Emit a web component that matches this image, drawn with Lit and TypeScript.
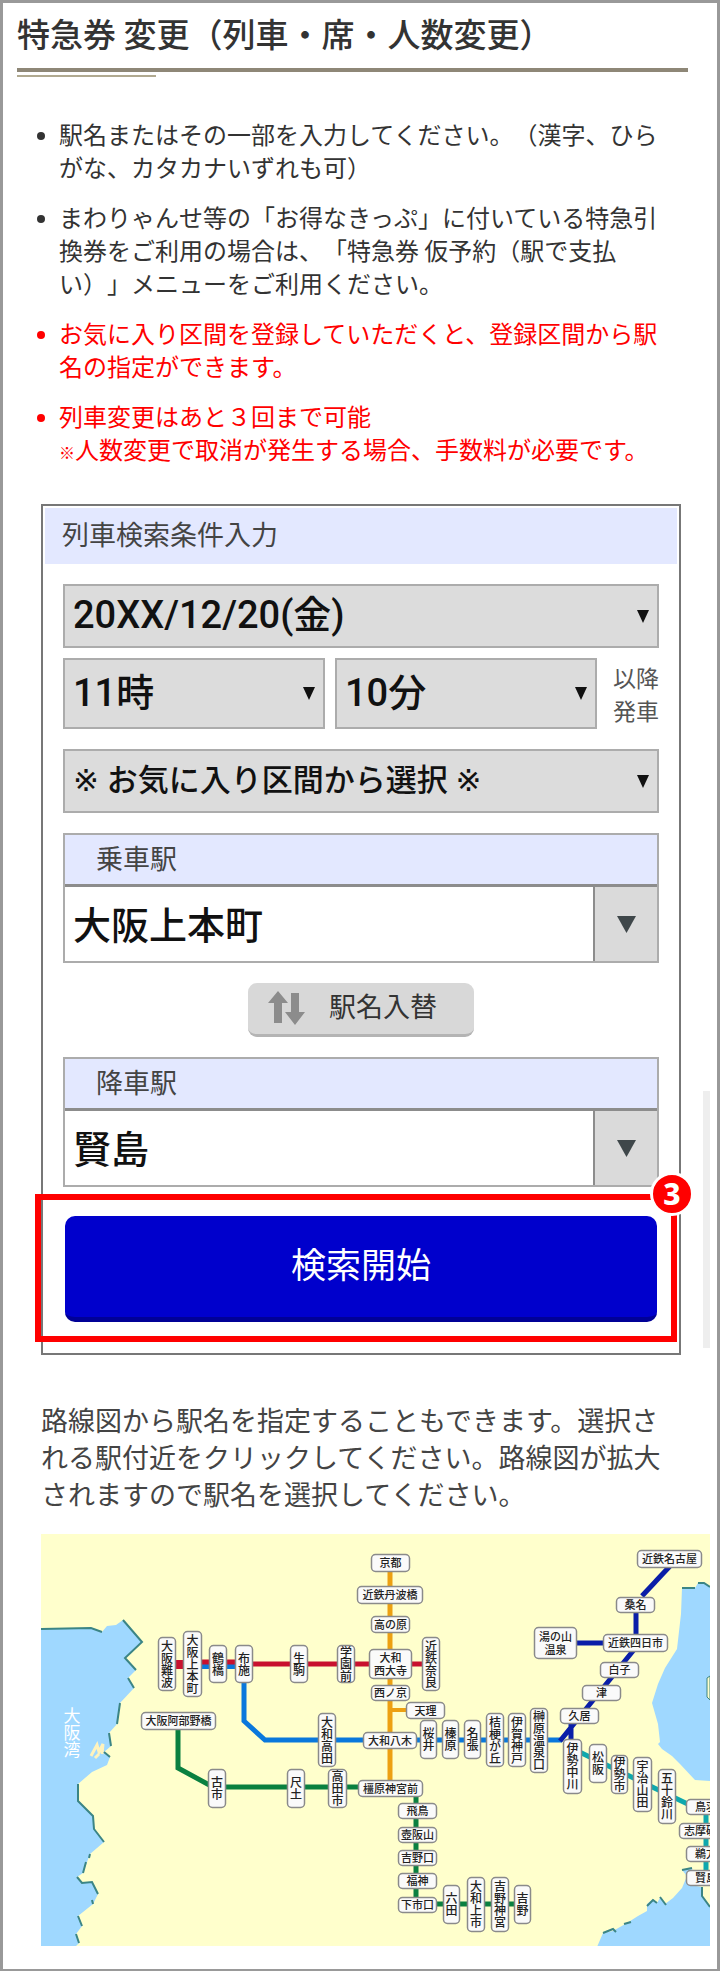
import { LitElement, html, svg, css } from "lit";
import { customElement, property, state } from "lit/decorators.js";

const FONT = css`"Noto Sans CJK JP", "Noto Sans", sans-serif`;

interface Stop {
  label: string;
  x: number;
  y: number;
  w: number;
  h: number;
  kind?: "v" | "two";
}

const h = (label: string, x: number, y: number, w: number, hh = 16): Stop => ({ label, x, y, w, h: hh });
const v = (label: string, x: number, y: number, hh: number, w = 18): Stop => ({ label, x, y, w, h: hh, kind: "v" });

const STOPS: Stop[] = [
  h("京都", 330, 20, 39, 18),
  h("近鉄丹波橋", 316, 52, 66, 18),
  h("高の原", 330, 82, 39, 17),
  { label: "大和/西大寺", x: 328, y: 115, w: 43, h: 30, kind: "two" },
  h("西ノ京", 330, 151, 39),
  h("天理", 365, 168, 39, 17),
  h("大和八木", 322, 198, 54, 17),
  h("橿原神宮前", 317, 246, 65, 17),
  h("飛鳥", 357, 269, 39),
  h("壺阪山", 357, 293, 39),
  h("吉野口", 357, 316, 39),
  h("福神", 357, 339, 39),
  h("下市口", 357, 363, 39),
  v("六田", 402, 351, 39, 17),
  v("大和上市", 426, 343, 55),
  v("吉野神宮", 450, 343, 55),
  v("吉野", 473, 351, 39, 17),
  v("大阪難波", 117, 103, 54),
  v("大阪上本町", 142, 97, 66, 19),
  v("鶴橋", 168, 111, 38),
  v("布施", 194, 111, 38),
  v("生駒", 249, 111, 38),
  v("学園前", 296, 111, 38),
  v("近鉄奈良", 381, 103, 54),
  h("大阪阿部野橋", 100, 178, 75, 18),
  v("大和高田", 277, 179, 54),
  v("古市", 167, 235, 39),
  v("尺土", 246, 235, 39),
  v("高田市", 287, 235, 39, 19),
  v("桜井", 379, 186, 39, 17),
  v("榛原", 401, 186, 39, 17),
  v("名張", 423, 186, 39, 17),
  v("桔梗が丘", 445, 179, 54),
  v("伊賀神戸", 467, 179, 54),
  v("榊原温泉口", 489, 174, 65),
  v("伊勢中川", 522, 205, 55, 19),
  v("松阪", 548, 210, 39),
  v("伊勢市", 570, 221, 39, 17),
  v("宇治山田", 592, 223, 55, 19),
  v("五十鈴川", 617, 235, 55),
  h("鳥羽", 645, 265, 40),
  h("志摩磯部", 638, 289, 54),
  h("鵜方", 645, 312, 40),
  h("賢島", 645, 336, 40),
  h("近鉄名古屋", 596, 16, 65, 18),
  h("桑名", 575, 63, 39),
  h("近鉄四日市", 562, 100, 65, 18),
  { label: "湯の山/温泉", x: 493, y: 93, w: 43, h: 32, kind: "two" },
  h("白子", 559, 128, 39),
  h("津", 541, 151, 39),
  h("久居", 519, 174, 39),
];

const LINES: { d: string; c: string; w: number }[] = [
  { d: "M349 30V250", c: "#eda012", w: 5 },
  { d: "M349 176H370", c: "#eda012", w: 4 },
  { d: "M130 132H203", c: "#0a78dc", w: 6 },
  { d: "M130 130.5H150", c: "#c8102e", w: 9 },
  { d: "M145 128H203", c: "#c8102e", w: 5 },
  { d: "M200 130H390", c: "#c8102e", w: 5 },
  { d: "M203 140V187L224 206H521", c: "#0a78dc", w: 5 },
  { d: "M137 190V234L172 253H360", c: "#0a8040", w: 5 },
  { d: "M375 258V370H480", c: "#0a8040", w: 5 },
  { d: "M528 213L655 274", c: "#0fa8ae", w: 5 },
  { d: "M665 272V345", c: "#0fa8ae", w: 5 },
  { d: "M629 32L601 62", c: "#0a1ea8", w: 5 },
  { d: "M595 70V105", c: "#0a1ea8", w: 5 },
  { d: "M530 109H570", c: "#0a1ea8", w: 5 },
  { d: "M596 112L519 207M530 190V208", c: "#0a1ea8", w: 5 },
];

const SEA = "#9fd8ff";

@customElement("route-map")
export class RouteMap extends LitElement {
  static styles = css`
    :host { display: block; }
    .map { display: block; width: 100%; height: auto; background: #ffffcc; }
    .stop { font-family: ${FONT}; font-size: 11px; font-weight: 500; fill: #222; text-anchor: middle; }
    .vertical { writing-mode: vertical-rl; font-size: 12px; }
    .bay { font-family: ${FONT}; font-size: 17px; fill: #fff; text-anchor: middle; writing-mode: vertical-rl; }
  `;

  private stop(s: Stop) {
    const cx = s.x + s.w / 2;
    const cy = s.y + s.h / 2;
    const box = svg`<rect x=${s.x + 0.5} y=${s.y + 0.5} width=${s.w - 1} height=${s.h - 1} rx="4" fill="#fafafa" stroke="#8a8a8a" stroke-width="1.5"/>`;
    if (s.kind === "v") {
      return svg`${box}<text class="stop vertical" x=${cx} y=${cy}>${s.label}</text>`;
    }
    if (s.kind === "two") {
      const [a, b] = s.label.split("/");
      return svg`${box}<text class="stop" x=${cx} y=${cy - 2}>${a}</text><text class="stop" x=${cx} y=${cy + 11}>${b}</text>`;
    }
    return svg`${box}<text class="stop" x=${cx} y=${cy + 4}>${s.label}</text>`;
  }

  render() {
    return html`
      <svg class="map" viewBox="0 0 669 412" role="img" aria-label="路線図">
        <g fill=${SEA}>
          <path d="M0 95L50 94L61 98L66 92L75 91L82 86L101 108L84 124L95 136L87 144L93 154L79 169L76 190L68 199L70 212L63 218L69 223L66 231L51 238L37 250V267L52 282L53 295L63 308L49 320L42 339L36 343L41 349L51 348L57 360L52 370L37 382L41 392L35 400L38 409L34 413H0Z"/>
          <path d="M641 54H654L657 49H663L669 53V247L654 246L639 230L631 222L621 215L617 210L619 208L617 190L611 169L617 150L624 134L636 115L640 80Z"/>
          <path d="M556 413L562 399L572 397L586 389L597 382L606 377V370L612 365L616 369L619 364L624 370L632 364L641 354L646 342L641 336L651 334L655 352L661 353V362L669 373V413Z"/>
        </g>
        <path d="M669 142L666 144V163L669 166Z" fill="#ffffcc" stroke="#3f8580"/>
        <path d="M50 222L56 211L58 218L62 210L61 220M54 224L58 220" fill="none" stroke="#fff3bd" stroke-width="3"/>
        <g fill="none" stroke="#3b8585" stroke-width="2">
          <path d="M0 95L50 94L61 98M82 86L101 108L84 124L95 136M87 144L93 154M79 169L76 190M68 199L70 212M63 218L69 223M37 250V267L52 282L53 295L63 308M49 320L48 324M45 328L42 339M36 343L41 349L51 348L57 360M52 370L51 366M37 382L41 392M35 400L38 409"/>
          <path d="M641 54H654M657 49H663L669 53M562 399L572 395L575 398M583 390L590 388M606 372L612 366L616 369M619 363L625 371M641 336L651 334M661 353V362L669 373"/>
        </g>
        ${LINES.map((l) => svg`<path d=${l.d} fill="none" stroke=${l.c} stroke-width=${l.w}/>`)}
        ${STOPS.map((s) => this.stop(s))}
        <text class="bay" x="31" y="199">大阪湾</text>
      </svg>
    `;
  }
}

@customElement("pick-list")
export class PickList extends LitElement {
  @property() label = "";
  @property({ attribute: false }) options: string[] = [];
  @property({ type: Boolean }) small = false;

  static styles = css`
    :host { display: grid; min-width: 0; }
    .select, .arrow { grid-area: 1 / 1; }
    .select {
      appearance: none;
      box-sizing: border-box;
      width: 100%;
      min-width: 0;
      margin: 0;
      padding: 0 32px 2px 8px;
      border: 2px solid #acacac;
      border-radius: 0;
      background: #dcdcdc;
      color: #111;
      font-family: Roboto, "DejaVu Sans", ${FONT};
      font-size: 38px;
      font-weight: 500;
    }
    .small { font-size: 31px; }
    .arrow { align-self: center; justify-self: end; margin-right: 10px; width: 12px; height: 13px; pointer-events: none; }
  `;

  render() {
    return html`
      <select class="select ${this.small ? "small" : ""}" aria-label=${this.label}>
        ${this.options.map((o) => html`<option>${o}</option>`)}
      </select>
      <svg class="arrow" viewBox="0 0 12 13" aria-hidden="true"><path d="M0 0H12L6 13Z" fill="#111"/></svg>
    `;
  }
}

@customElement("station-field")
export class StationField extends LitElement {
  @property() label = "";
  @property() value = "";

  static styles = css`
    :host { display: block; border: 2px solid #acacac; }
    .label {
      display: block;
      padding: 0 0 4px 31px;
      background: #e3e8ff;
      border-bottom: 3px solid #8c8c8c;
      color: #444;
      font-size: 27px;
      line-height: 45px;
    }
    .row { display: grid; grid-template-columns: 1fr 64px; height: 74px; }
    .input {
      min-width: 0;
      box-sizing: border-box;
      border: 0;
      padding: 0 8px 4px;
      background: #fff;
      color: #111;
      font-family: ${FONT};
      font-size: 38px;
      font-weight: 500;
    }
    .open { display: grid; place-items: center; border: 0; border-left: 2px solid #8c8c8c; padding: 0; background: #dadada; }
    .arrow { width: 19px; height: 17px; }
  `;

  render() {
    return html`
      <label class="label" for="station">${this.label}</label>
      <div class="row">
        <input class="input" id="station" type="text" .value=${this.value} />
        <button class="open" type="button" aria-label="${this.label}を選択">
          <svg class="arrow" viewBox="0 0 19 17" aria-hidden="true"><path d="M0 0H19L9.500 17Z" fill="#3f474a"/></svg>
        </button>
      </div>
    `;
  }
}

@customElement("app-root")
export class AppRoot extends LitElement {
  @state() private from = "大阪上本町";
  @state() private to = "賢島";

  static styles = css`
    :host {
      display: block;
      box-sizing: border-box;
      border: 3px solid #999;
      background: #fff;
      color: #333;
      font-family: ${FONT};
      text-spacing-trim: space-all;
      padding-bottom: 23px;
    }
    .head { margin: 0 29px 0 14px; padding-top: 6px; }
    .title { margin: 0; padding-bottom: 11px; border-bottom: 4px solid #8e8777; font-size: 33px; font-weight: 500; line-height: 48px; }
    .accent { width: 139px; height: 2px; margin-top: 3px; background: #b0a990; }
    .notes { margin: 40px 51px 39px 56px; padding: 0; list-style: none; font-size: 24px; line-height: 33px; }
    .note { position: relative; }
    .note + .note { margin-top: 17px; }
    .note::before { content: ""; position: absolute; left: -22px; top: 15px; width: 8px; height: 8px; border-radius: 50%; background: currentColor; }
    .alert { color: #f00; }
    .mark { font-size: 16px; font-weight: 500; line-height: 16px; }
    .card { position: relative; margin: 0 36px 0 38px; border: 2px solid #777; padding: 2px 2px 11px; }
    .legend { margin: 0; padding: 0 0 4px 17px; background: #e3e8ff; color: #444; font-size: 27px; font-weight: 400; line-height: 52px; }
    .fields { display: grid; gap: 20px; padding: 20px 18px 7px; }
    .when { display: grid; gap: 10px; }
    .date, .fav { height: 64px; }
    .time { display: grid; grid-template-columns: 1fr 1fr 52px; gap: 10px; height: 71px; }
    .after { align-self: center; justify-self: end; color: #555; font-size: 23px; line-height: 33px; }
    .swap {
      justify-self: center;
      display: flex;
      align-items: center;
      gap: 24px;
      width: 226px;
      height: 54px;
      padding: 0 20px 6px;
      border: 0;
      border-bottom: 3px solid #b4b4b4;
      border-radius: 9px;
      background: #d8d8d8;
      color: #333;
      font-family: ${FONT};
      font-size: 27px;
    }
    .arrows { flex: none; width: 37px; height: 34px; margin-top: 4px; }
    .target { position: relative; margin: 0 0 0 -10px; border: 6px solid #f00; padding: 16px 14px 14px 24px; }
    .search {
      display: block;
      width: 100%;
      height: 106px;
      padding: 0 0 8px;
      border: 0;
      border-bottom: 5px solid #000096;
      border-radius: 10px;
      background: #0000cc;
      color: #fff;
      font-family: ${FONT};
      font-size: 35px;
    }
    .badge {
      position: absolute;
      top: -28px;
      right: -23px;
      width: 38px;
      height: 38px;
      border: 3px solid #fff;
      border-radius: 50%;
      background: #f00;
      color: #fff;
      font-family: "Noto Sans", ${FONT};
      font-size: 30px;
      font-weight: 800;
      line-height: 38px;
      text-align: center;
    }
    .thumb { position: absolute; right: -31px; bottom: 5px; width: 7px; height: 257px; background: #eee; }
    .guide { margin: 46px 36px 22px 38px; color: #444; font-size: 27px; line-height: 37px; }
    .route { margin: 0 7px 0 38px; }
  `;

  private swap() {
    [this.from, this.to] = [this.to, this.from];
  }

  render() {
    return html`
      <header class="head">
        <h1 class="title">特急券 変更（列車・席・人数変更）</h1>
        <div class="accent"></div>
      </header>
      <ul class="notes">
        <li class="note">駅名またはその一部を入力してください。（漢字、ひらがな、カタカナいずれも可）</li>
        <li class="note">まわりゃんせ等の「お得なきっぷ」に付いている特急引換券をご利用の場合は、「特急券 仮予約（駅で支払い）」メニューをご利用ください。</li>
        <li class="note alert">お気に入り区間を登録していただくと、登録区間から駅名の指定ができます。</li>
        <li class="note alert">列車変更はあと３回まで可能<br /><span class="mark">※</span>人数変更で取消が発生する場合、手数料が必要です。</li>
      </ul>
      <form class="card" @submit=${(e: Event) => e.preventDefault()}>
        <h2 class="legend">列車検索条件入力</h2>
        <div class="fields">
          <div class="when">
            <pick-list class="date" label="乗車日" .options=${["20XX/12/20(金)"]}></pick-list>
            <div class="time">
              <pick-list label="時" .options=${["11時"]}></pick-list>
              <pick-list label="分" .options=${["10分"]}></pick-list>
              <span class="after">以降<br />発車</span>
            </div>
          </div>
          <pick-list class="fav" label="お気に入り区間" small .options=${["※ お気に入り区間から選択 ※"]}></pick-list>
          <station-field label="乗車駅" .value=${this.from}></station-field>
          <button class="swap" type="button" @click=${this.swap}>
            <svg class="arrows" viewBox="0 0 37 34" aria-hidden="true">
              <path d="M10 0L20 12H14V32H6V12H0ZM23 2H31V21H37L27 34L17 21H23Z" fill="#8c8c8c"/>
            </svg>
            駅名入替
          </button>
          <station-field label="降車駅" .value=${this.to}></station-field>
        </div>
        <div class="target">
          <button class="search" type="submit">検索開始</button>
          <span class="badge">3</span>
        </div>
        <div class="thumb"></div>
      </form>
      <p class="guide">路線図から駅名を指定することもできます。選択される駅付近をクリックしてください。路線図が拡大されますので駅名を選択してください。</p>
      <route-map class="route"></route-map>
    `;
  }
}
